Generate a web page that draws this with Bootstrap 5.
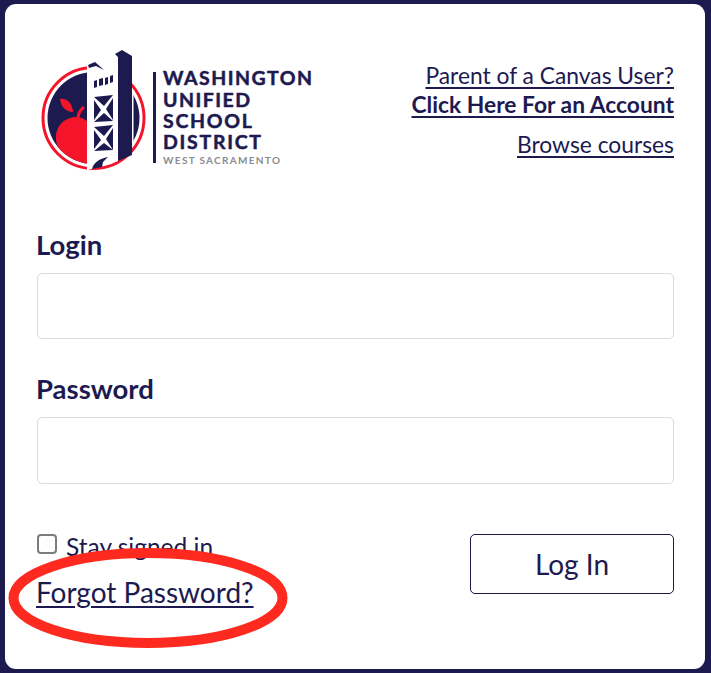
<!DOCTYPE html>
<html lang="en">

<head>
    <meta charset="UTF-8">
    <meta name="viewport" content="width=device-width, initial-scale=1.0">
    <title>Log In to Canvas</title>
    <link href="https://cdn.jsdelivr.net/npm/bootstrap@5.3.3/dist/css/bootstrap.min.css" rel="stylesheet">
    <style>
        html, body { height: 100%; }
        body {
            background: #1d1a50;
            color: #1d1a50;
            font-family: Lato, "Liberation Sans", sans-serif;
            padding: 4px 6px 4px 5px;
        }
        a { color: #1d1a50; text-underline-offset: 3px; }
        a:hover { color: #1d1a50; }
        .login-box {
            position: relative;
            height: 665px;
            border: 0;
            border-radius: 11px;
            padding: 41px 31px 0 32px;
            color: #1d1a50;
        }
        .logo-img { display: block; width: 280px; height: 126px; }
        .top-links { font-size: 22.8px; line-height: 29px; padding-top: 16px; text-align: right; }
        .top-links p { margin: 0 0 11px; }
        .field-label { font-size: 27.5px; font-weight: 700; line-height: 30px; margin: 0 0 13px -1px; }
        .login-input {
            height: 66px;
            border: 1px solid #d3dde3;
            border-radius: 5px;
        }
        .pw-input { height: 67px; }
        .login-form { margin-top: 59px; }
        .pw-group { margin-top: 35px; }
        .bottom-row { margin-top: 50px; }
        .login-check { font-size: 24.5px; line-height: 26px; height: 26px; }
        .login-check .form-check-input {
            width: 20px;
            height: 20px;
            margin: 0 9px 6px 0;
            border: 2px solid #7b7b80;
            border-radius: 4px;
            flex: none;
        }
        .forgot-link { font-size: 28px; line-height: 33px; margin: 16px 0 0 -1px; }
        .login-btn {
            width: 204px;
            height: 60px;
            border: 1px solid #1d1a50;
            border-radius: 5px;
            color: #1d1a50;
            background: #fff;
            font-size: 28px;
        }
        .circle-mark { position: absolute; left: 3px; top: 544px; pointer-events: none; }
    </style>
</head>

<body>

    <div class="card login-box">
        <!-- Logo and links -->
        <div class="d-flex justify-content-between align-items-start">
            <svg class="logo-img" viewBox="37 45 280 126" role="img" aria-label="Washington Unified School District">
                <defs>
                    <clipPath id="innerDisc"><circle cx="93.5" cy="118" r="46"/></clipPath>
                </defs>
                <circle cx="93.5" cy="118" r="50.5" fill="none" stroke="#f5152a" stroke-width="3"/>
                <g clip-path="url(#innerDisc)">
                    <rect x="47" y="70" width="41" height="96" fill="#1d1a50"/>
                    <rect x="133.5" y="70" width="8" height="96" fill="#1d1a50"/>
                    <!-- apple -->
                    <path d="M87 121C82 117 76 116 70 118 60 121 55 130 56 140 57 150 66 160 76 164H87Z" fill="#f5152a"/>
                    <path d="M60 99C67 98 72 103 73 112 66 112 61 107 60 99Z" fill="#f5152a"/>
                    <path d="M78 119C78 114 80 110 84 107" fill="none" stroke="#f5152a" stroke-width="3"/>
                </g>
                <!-- tower -->
                <path d="M87 62H118V161L88 170H87Z" fill="#fff"/>
                <path d="M88 65 95 62 104 70 96 66 89 68Z" fill="#1d1a50"/>
                <path d="M115 54 122 50 132 56V155L118 161V57Z" fill="#1d1a50"/>
                <path d="M94 81 97 80V87L94 88ZM99 79 103 78V85L99 86ZM105 78 108 77V84L105 85ZM110 76 113 75V82L110 83Z" fill="#1d1a50"/>
                <path d="M94 97 113 95 104 106ZM94 100 101 110 94 120ZM113 98V120L106 109ZM94 122 104 113 113 121Z" fill="#1d1a50"/>
                <path d="M94 127 113 125 104 136ZM94 130 101 140 94 149ZM113 128V150L106 139ZM94 151 104 143 113 150Z" fill="#1d1a50"/>
                <path d="M92 169C94 162 99 159 108 157L103 162 102 167Z" fill="#1d1a50"/>
                <rect x="153" y="72" width="3" height="91" fill="#1d1a50"/>
                <g fill="#1d1a50" font-family="Lato, sans-serif" font-weight="700" font-size="19.5" stroke="#1d1a50" stroke-width=".5">
                    <text x="163" y="85" textLength="149" lengthAdjust="spacing">WASHINGTON</text>
                    <text x="163" y="107" textLength="87" lengthAdjust="spacing">UNIFIED</text>
                    <text x="163" y="128" textLength="89" lengthAdjust="spacing">SCHOOL</text>
                    <text x="163" y="149" textLength="98" lengthAdjust="spacing">DISTRICT</text>
                </g>
                <text x="163" y="164" textLength="117" lengthAdjust="spacing" fill="#8b8b90" font-family="Lato, sans-serif" font-weight="700" font-size="10">WEST SACRAMENTO</text>
            </svg>
            <div class="top-links">
                <p>
                    <a href="#">Parent of a Canvas User?</a><br>
                    <a href="#" class="fw-bold">Click Here For an Account</a>
                </p>
                <p><a href="#">Browse courses</a></p>
            </div>
        </div>

        <form class="login-form">
            <div>
                <label class="field-label d-block" for="loginId">Login</label>
                <input type="text" class="form-control login-input" id="loginId">
            </div>
            <div class="pw-group">
                <label class="field-label d-block" for="loginPw">Password</label>
                <input type="password" class="form-control login-input pw-input" id="loginPw">
            </div>

            <div class="d-flex justify-content-between align-items-start bottom-row">
                <div>
                    <div class="login-check d-flex align-items-center">
                        <input type="checkbox" class="form-check-input" id="staySigned">
                        <label for="staySigned">Stay signed in</label>
                    </div>
                    <a href="#" class="forgot-link d-block">Forgot Password?</a>
                </div>
                <button type="button" class="btn login-btn">Log In</button>
            </div>
        </form>

        <svg class="circle-mark" width="280" height="100" viewBox="0 0 280 100">
            <ellipse cx="140" cy="50" rx="134.5" ry="45" fill="none" stroke="#ff2a1f" stroke-width="10"/>
        </svg>
    </div>

    <script src="https://cdn.jsdelivr.net/npm/bootstrap@5.3.3/dist/js/bootstrap.bundle.min.js"></script>

</body>

</html>
